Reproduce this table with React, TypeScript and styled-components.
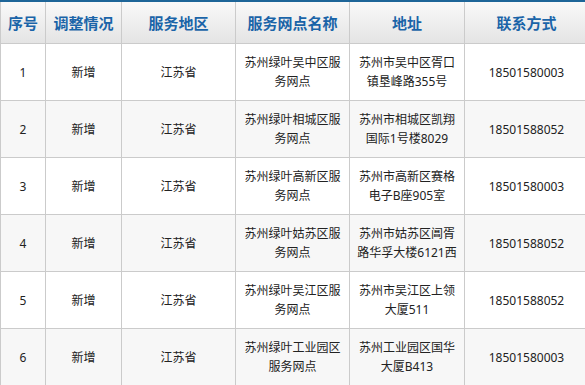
import styled, { createGlobalStyle } from 'styled-components';

type Outlet = {
  id: number;
  change: string;
  region: string;
  name: string;
  address: string;
  phone: string;
};

const outlets: Outlet[] = [
  { id: 1, change: '新增', region: '江苏省', name: '苏州绿叶吴中区服务网点', address: '苏州市吴中区胥口镇垦峰路355号', phone: '18501580003' },
  { id: 2, change: '新增', region: '江苏省', name: '苏州绿叶相城区服务网点', address: '苏州市相城区凯翔国际1号楼8029', phone: '18501588052' },
  { id: 3, change: '新增', region: '江苏省', name: '苏州绿叶高新区服务网点', address: '苏州市高新区赛格电子B座905室', phone: '18501580003' },
  { id: 4, change: '新增', region: '江苏省', name: '苏州绿叶姑苏区服务网点', address: '苏州市姑苏区阊胥路华孚大楼6121西', phone: '18501588052' },
  { id: 5, change: '新增', region: '江苏省', name: '苏州绿叶吴江区服务网点', address: '苏州市吴江区上领大厦511', phone: '18501588052' },
  { id: 6, change: '新增', region: '江苏省', name: '苏州绿叶工业园区服务网点', address: '苏州工业园区国华大厦B413', phone: '18501580003' },
];

const columns = [
  { label: '序号', width: 46 },
  { label: '调整情况', width: 76 },
  { label: '服务地区', width: 114 },
  { label: '服务网点名称', width: 114 },
  { label: '地址', width: 115 },
  { label: '联系方式', width: 124 },
];

export default function App() {
  return (
    <>
      <GlobalStyle />
      <Table>
        <colgroup>
          {columns.map((col) => (
            <col key={col.label} style={{ width: col.width }} />
          ))}
        </colgroup>
        <thead>
          <tr>
            {columns.map((col) => (
              <HeadCell key={col.label}>{col.label}</HeadCell>
            ))}
          </tr>
        </thead>
        <tbody>
          {outlets.map((o) => (
            <Row key={o.id} $striped={o.id % 2 === 0}>
              <Cell>{o.id}</Cell>
              <Cell>{o.change}</Cell>
              <Cell>{o.region}</Cell>
              <Cell>{o.name}</Cell>
              <Cell>{o.address}</Cell>
              <Cell>{o.phone}</Cell>
            </Row>
          ))}
        </tbody>
      </Table>
    </>
  );
}

const GlobalStyle = createGlobalStyle`
  html, body {
    margin: 0;
    background: #fff;
    overflow: hidden;
  }
  body {
    font-family: "Noto Sans", "Noto Sans CJK SC", sans-serif;
  }
`;

const Table = styled.table`
  table-layout: fixed;
  width: 589px;
  border-collapse: separate;
  border-spacing: 0;
  border-top: 2px solid #1d6598;
`;

const HeadCell = styled.th`
  box-sizing: border-box;
  height: 42px;
  padding: 0;
  border-right: 1px solid #cbcbcb;
  border-bottom: 1px solid #cbcbcb;
  background: linear-gradient(#f9f9f9, #e4e4e4);
  color: #1a64a8;
  font-family: "Noto Sans CJK SC", sans-serif;
  font-size: 15px;
  font-weight: bold;
  line-height: 18px;
  text-align: center;

  &:first-child {
    border-left: 1px solid #cbcbcb;
  }
`;

const Row = styled.tr<{ $striped: boolean }>`
  background: ${(p) => (p.$striped ? '#f7f7f7' : '#fff')};
`;

const Cell = styled.td`
  box-sizing: border-box;
  height: 57px;
  padding: 0 4px;
  border-right: 1px solid #cbcbcb;
  border-bottom: 1px solid #cbcbcb;
  color: #222;
  font-size: 12px;
  line-height: 19px;
  text-align: center;
  vertical-align: middle;
  word-break: break-all;

  &:first-child {
    border-left: 1px solid #cbcbcb;
    padding: 0;
  }
`;
